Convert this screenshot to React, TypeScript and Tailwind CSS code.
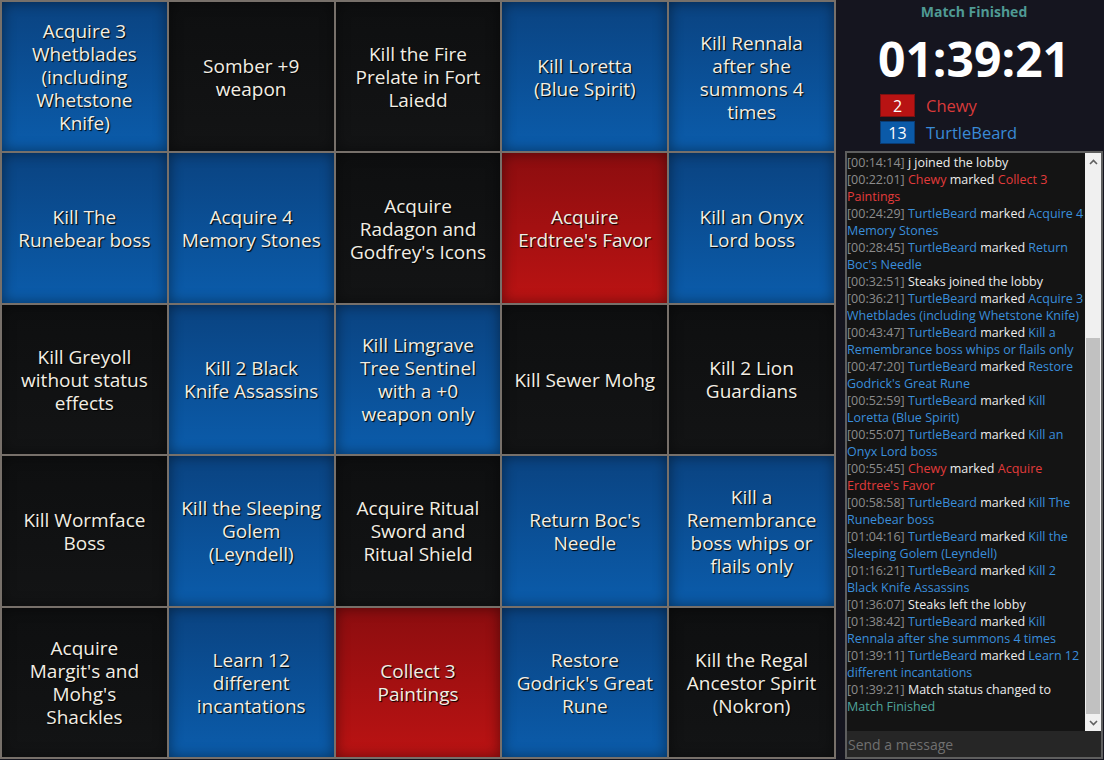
import React from "react";

type Color = "B" | "K" | "R";

const cells: [string, Color][] = [
  ["Acquire 3|Whetblades|(including|Whetstone|Knife)", "B"],
  ["Somber +9|weapon", "K"],
  ["Kill the Fire|Prelate in Fort|Laiedd", "K"],
  ["Kill Loretta|(Blue Spirit)", "B"],
  ["Kill Rennala|after she|summons 4|times", "B"],
  ["Kill The|Runebear boss", "B"],
  ["Acquire 4|Memory Stones", "B"],
  ["Acquire|Radagon and|Godfrey's Icons", "K"],
  ["Acquire|Erdtree's Favor", "R"],
  ["Kill an Onyx|Lord boss", "B"],
  ["Kill Greyoll|without status|effects", "K"],
  ["Kill 2 Black|Knife Assassins", "B"],
  ["Kill Limgrave|Tree Sentinel|with a +0|weapon only", "B"],
  ["Kill Sewer Mohg", "K"],
  ["Kill 2 Lion|Guardians", "K"],
  ["Kill Wormface|Boss", "K"],
  ["Kill the Sleeping|Golem|(Leyndell)", "B"],
  ["Acquire Ritual|Sword and|Ritual Shield", "K"],
  ["Return Boc's|Needle", "B"],
  ["Kill a|Remembrance|boss whips or|flails only", "B"],
  ["Acquire|Margit's and|Mohg's|Shackles", "K"],
  ["Learn 12|different|incantations", "B"],
  ["Collect 3|Paintings", "R"],
  ["Restore|Godrick's Great|Rune", "B"],
  ["Kill the Regal|Ancestor Spirit|(Nokron)", "K"],
];

const cellBg: Record<Color, string> = {
  B: "bg-[linear-gradient(to_bottom,#0a4381,#0b5cab)]",
  K: "bg-[linear-gradient(to_bottom,#0e0f10,#131415)]",
  R: "bg-[linear-gradient(to_bottom,#8c0d0f,#bb1313)]",
};

// chat segments: [text, kind]  t=timestamp w=white b=blue r=red g=teal
type Seg = [string, "t" | "w" | "b" | "r" | "g"];

const tb = (time: string, goal: string): Seg[] => [
  [`[${time}] `, "t"],
  ["TurtleBeard", "b"],
  [" marked ", "w"],
  [goal, "b"],
];

const messages: Seg[][] = [
  [["[00:14:14] ", "t"], ["j joined the lobby", "w"]],
  [["[00:22:01] ", "t"], ["Chewy", "r"], [" marked ", "w"], ["Collect 3 Paintings", "r"]],
  tb("00:24:29", "Acquire 4 Memory Stones"),
  tb("00:28:45", "Return Boc's Needle"),
  [["[00:32:51] ", "t"], ["Steaks joined the lobby", "w"]],
  tb("00:36:21", "Acquire 3 Whetblades (including Whetstone Knife)"),
  tb("00:43:47", "Kill a Remembrance boss whips or flails only"),
  tb("00:47:20", "Restore Godrick's Great Rune"),
  tb("00:52:59", "Kill Loretta (Blue Spirit)"),
  tb("00:55:07", "Kill an Onyx Lord boss"),
  [["[00:55:45] ", "t"], ["Chewy", "r"], [" marked ", "w"], ["Acquire Erdtree's Favor", "r"]],
  tb("00:58:58", "Kill The Runebear boss"),
  tb("01:04:16", "Kill the Sleeping Golem (Leyndell)"),
  tb("01:16:21", "Kill 2 Black Knife Assassins"),
  [["[01:36:07] ", "t"], ["Steaks left the lobby", "w"]],
  tb("01:38:42", "Kill Rennala after she summons 4 times"),
  tb("01:39:11", "Learn 12 different incantations"),
  [["[01:39:21] ", "t"], ["Match status changed to ", "w"], ["Match Finished", "g"]],
];

const segColor = {
  t: "text-[#8c8c8c]",
  w: "text-[#ececec]",
  b: "text-[#3a8edb]",
  r: "text-[#e23b3b]",
  g: "text-[#4fa49b]",
};

function Cell({ text, color }: { text: string; color: Color }) {
  return (
    <div
      className={`flex flex-col items-center justify-center px-1 pt-[2px] text-center text-[19px] leading-[23px] text-[#f2eee4] shadow-[inset_0_0_14px_rgba(0,0,0,0.45)] [text-shadow:1px_1px_1px_#000] ${cellBg[color]}`}
    >
      {text.split("|").map((line, i) => (
        <span key={i} className="whitespace-nowrap">
          {line}
        </span>
      ))}
    </div>
  );
}

export default function App() {
  return (
    <div className="flex h-[760px] w-[1104px] bg-[#15151f] font-['Open_Sans',sans-serif]">
      <div className="grid h-[759px] w-[836px] shrink-0 grid-cols-5 grid-rows-5 gap-[2px] bg-[#77706a] p-[2px]">
        {cells.map(([t, c], i) => (
          <Cell key={i} text={t} color={c} />
        ))}
      </div>

      <div className="flex flex-1 flex-col pl-[9px] pr-[1px]">
        <div className="pt-[2px] text-center text-[14px] font-bold leading-[20px] text-[#4f9a94]">
          Match Finished
        </div>
        <div className="mt-[9px] text-center text-[48px] font-bold leading-[56px] text-white">
          01:39:21
        </div>
        <div className="mt-[7px] flex flex-col gap-[4px] pl-[35px]">
          <div className="flex h-[23px] items-center gap-[11px]">
            <div className="flex h-[23px] w-[35px] items-center justify-center border border-[#7c1111] bg-[#b81313] text-[16px] leading-[20px] text-white">
              2
            </div>
            <span className="text-[16.5px] leading-[23px] text-[#d83a3a]">Chewy</span>
          </div>
          <div className="flex h-[23px] items-center gap-[11px]">
            <div className="flex h-[23px] w-[35px] items-center justify-center border border-[#0a3c74] bg-[#0b5aa8] text-[16px] leading-[20px] text-white">
              13
            </div>
            <span className="text-[16.5px] leading-[23px] text-[#3a8ad6]">TurtleBeard</span>
          </div>
        </div>

        <div className="mt-[7px] mb-[1px] flex min-h-0 flex-1 flex-col border-2 border-[#5e5e5e] bg-[#141414]">
          <div className="flex min-h-0 flex-1">
            <div className="min-w-0 flex-1 overflow-hidden pt-[1px] text-[12.5px] leading-[17px]">
              {messages.map((m, i) => (
                <div key={i}>
                  {m.map(([s, k], j) => (
                    <span key={j} className={segColor[k]}>
                      {s}
                    </span>
                  ))}
                </div>
              ))}
            </div>
            <div className="flex w-[16px] flex-col bg-[#f0f0f0]">
              <div className="flex h-[17px] items-center justify-center">
                <svg width="9" height="6" viewBox="0 0 9 6">
                  <path d="M1 5 L4.5 1.5 L8 5" stroke="#606060" strokeWidth="1.6" fill="none" />
                </svg>
              </div>
              <div className="flex flex-1 flex-col justify-end px-[1px]">
                <div className="h-[376px] bg-[#c1c1c1]" />
              </div>
              <div className="flex h-[17px] items-center justify-center">
                <svg width="9" height="6" viewBox="0 0 9 6">
                  <path d="M1 1 L4.5 4.5 L8 1" stroke="#606060" strokeWidth="1.6" fill="none" />
                </svg>
              </div>
            </div>
          </div>
          <div className="flex h-[26px] items-center bg-[#262626] px-[1px] text-[14px] text-[#707070]">
            Send a message
          </div>
        </div>
      </div>
    </div>
  );
}
